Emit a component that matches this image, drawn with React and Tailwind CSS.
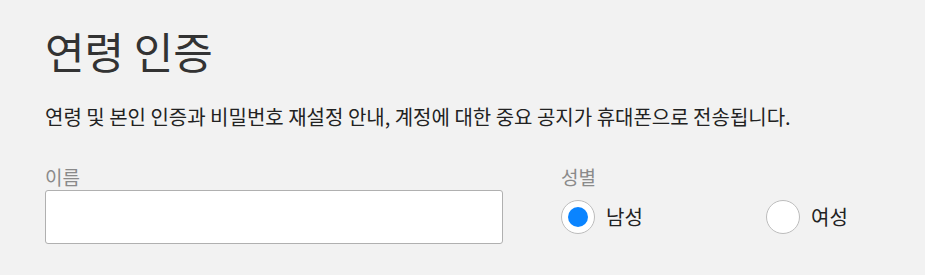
export default function App() {
  const font = { fontFamily: '"Noto Sans CJK KR", "Noto Sans", sans-serif' };
  return (
    <div className="w-[925px] h-[275px] bg-[#f2f2f2] pl-[45px] pt-[26px]" style={font}>
      <h1 className="text-[43px] leading-[48px] text-[#333333] font-normal">연령 인증</h1>
      <p className="mt-[30px] text-[20px] leading-[26px] text-[#222222]">
        연령 및 본인 인증과 비밀번호 재설정 안내, 계정에 대한 중요 공지가 휴대폰으로 전송됩니다.
      </p>
      <div className="mt-[35px] flex gap-[58px]">
        <div className="w-[458px] flex flex-col">
          <label className="text-[19px] leading-[24px] text-[#8a8a8a]">이름</label>
          <input
            type="text"
            className="mt-px h-[54px] w-full bg-white border border-[#b0b0b0] rounded-[3px] outline-none px-3"
          />
        </div>
        <div className="flex flex-col">
          <span className="text-[19px] leading-[24px] text-[#8a8a8a]">성별</span>
          <div className="mt-px h-[54px] flex items-center">
            <div className="w-[205px] flex items-center gap-[11px]">
              <span className="w-[34px] h-[34px] rounded-full bg-white border border-[#bdbdbd] flex items-center justify-center">
                <span className="w-[20px] h-[20px] rounded-full bg-[#0a84ff]" />
              </span>
              <span className="text-[20px] text-[#222222]">남성</span>
            </div>
            <div className="flex items-center gap-[11px]">
              <span className="w-[34px] h-[34px] rounded-full bg-white border border-[#bdbdbd]" />
              <span className="text-[20px] text-[#222222]">여성</span>
            </div>
          </div>
        </div>
      </div>
    </div>
  );
}
